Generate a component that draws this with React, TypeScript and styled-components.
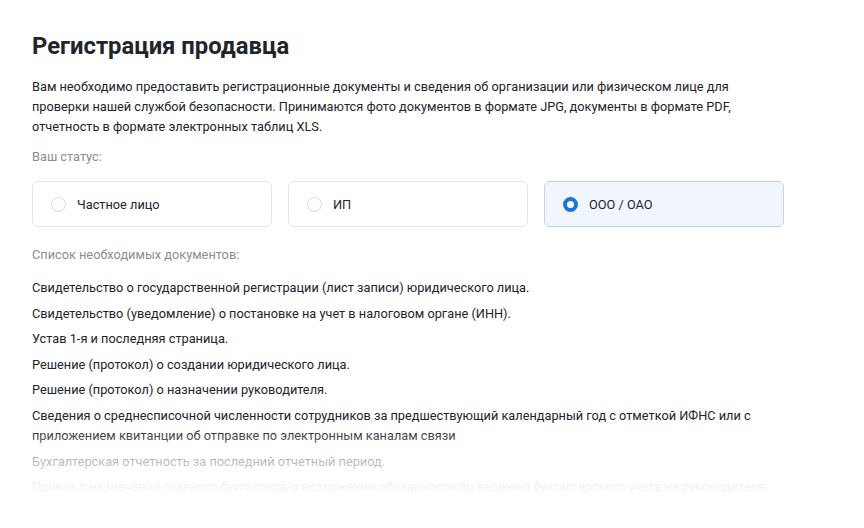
import React, { useState } from "react";
import styled, { createGlobalStyle } from "styled-components";

const GlobalStyle = createGlobalStyle`
  html, body { margin: 0; padding: 0; background: #ffffff; }
  body {
    font-family: Roboto, "Noto Sans", "Liberation Sans", sans-serif;
    color: #222429;
    -webkit-font-smoothing: antialiased;
  }
  * { box-sizing: border-box; }
`;

const Page = styled.main`
  width: 864px;
  height: 528px;
  overflow: hidden;
  padding: 31px 32px 0;
  position: relative;
`;

const Content = styled.section`
  width: 752px;
  display: flex;
  flex-direction: column;
`;

const Title = styled.h1`
  margin: 0 0 16px;
  font-size: 23.8px;
  line-height: 30px;
  font-weight: 700;
  color: #222429;
`;

const Lead = styled.p`
  margin: 0;
  font-size: 12.75px;
  line-height: 20px;
  color: #222429;
`;

const Caption = styled.div<{ $gap: number }>`
  margin-top: ${(p) => p.$gap}px;
  font-size: 12.75px;
  line-height: 20px;
  color: #8a8d93;
`;

const Options = styled.div`
  display: grid;
  grid-template-columns: repeat(3, 240px);
  gap: 16px;
  margin-top: 14px;
`;

const Option = styled.label<{ $active: boolean }>`
  height: 46px;
  display: flex;
  align-items: center;
  gap: 11px;
  padding: 0 18px;
  border-radius: 6px;
  border: 1px solid ${(p) => (p.$active ? "#b9d3f3" : "#e1e3e6")};
  background: ${(p) => (p.$active ? "#f1f6fd" : "#ffffff")};
  font-size: 12.75px;
  color: #222429;
  cursor: pointer;
`;

const Radio = styled.span<{ $checked: boolean }>`
  width: 15px;
  height: 15px;
  border-radius: 50%;
  flex: none;
  background: #ffffff;
  border: ${(p) => (p.$checked ? "4px solid #1a73e0" : "1px solid #d6d8dc")};
`;

const DocList = styled.ol`
  list-style: none;
  margin: 13px 0 0;
  padding: 0;
  display: flex;
  flex-direction: column;
  gap: 5.6px;
`;

const DocItem = styled.li`
  font-size: 12.75px;
  line-height: 20px;
  color: #222429;
`;

const Fade = styled.div`
  position: absolute;
  left: 0;
  right: 0;
  top: 430px;
  height: 98px;
  background: linear-gradient(
    to bottom,
    rgba(255, 255, 255, 0) 0%,
    rgba(255, 255, 255, 0.6) 25%,
    rgba(255, 255, 255, 0.93) 55%,
    #ffffff 80%
  );
  pointer-events: none;
`;

const statuses = ["Частное лицо", "ИП", "ООО / ОАО"];

const documents = [
  "Свидетельство о государственной регистрации (лист записи) юридического лица.",
  "Свидетельство (уведомление) о постановке на учет в налоговом органе (ИНН).",
  "Устав 1-я и последняя страница.",
  "Решение (протокол) о создании юридического лица.",
  "Решение (протокол) о назначении руководителя.",
  "Сведения о среднесписочной численности сотрудников за предшествующий календарный год с отметкой ИФНС или с приложением квитанции об отправке по электронным каналам связи",
  "Бухгалтерская отчетность за последний отчетный период.",
  "Приказ о назначении главного бухгалтера/о возложении обязанности по ведению бухгалтерского учета на руководителя.",
];

export default function App() {
  const [status, setStatus] = useState(2);
  return (
    <>
      <GlobalStyle />
      <Page>
        <Content>
          <Title>Регистрация продавца</Title>
          <Lead>
            Вам необходимо предоставить регистрационные документы и сведения об организации или
            физическом лице для проверки нашей службой безопасности. Принимаются фото документов в
            формате JPG, документы в формате PDF, отчетность в формате электронных таблиц XLS.
          </Lead>
          <Caption $gap={10}>Ваш статус:</Caption>
          <Options>
            {statuses.map((s, i) => (
              <Option key={s} $active={i === status} onClick={() => setStatus(i)}>
                <Radio $checked={i === status} />
                {s}
              </Option>
            ))}
          </Options>
          <Caption $gap={18}>Список необходимых документов:</Caption>
          <DocList>
            {documents.map((d) => (
              <DocItem key={d}>{d}</DocItem>
            ))}
          </DocList>
        </Content>
        <Fade />
      </Page>
    </>
  );
}
